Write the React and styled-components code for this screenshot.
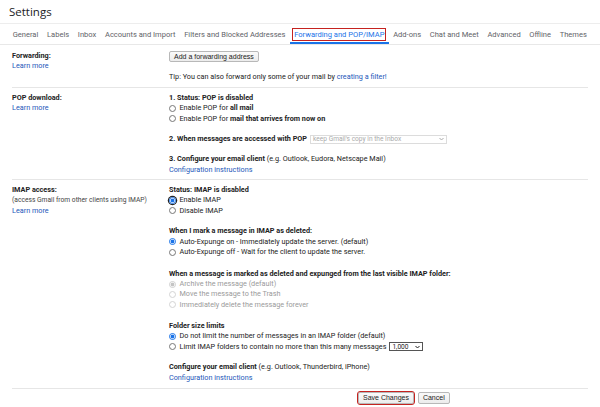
import React from "react";
import styled, { createGlobalStyle, css } from "styled-components";

const GlobalStyle = createGlobalStyle`
  body {
    margin: 0;
    background: #fff;
    font-family: Roboto, "Liberation Sans", Arial, sans-serif;
    color: #222;
  }
`;

const Page = styled.div`
  width: 600px;
  height: 407px;
  overflow: hidden;
`;

const Header = styled.div`
  height: 24px;
  box-sizing: border-box;
  padding: 5px 9px 0;
  border-bottom: 1px solid #ededed;
`;

const Title = styled.h1`
  margin: 0;
  font-family: "Open Sans", Roboto, sans-serif;
  font-size: 11.5px;
  font-weight: 400;
  color: #202124;
  line-height: 14px;
`;

const Tabs = styled.nav`
  display: flex;
  height: 21px;
  box-sizing: border-box;
  padding: 0 0 0 8.3px;
  border-bottom: 1px solid #e8e8e8;
`;

const Tab = styled.div`
  display: flex;
  align-items: center;
  padding: 0 4.35px;
  font-family: Roboto, sans-serif;
  font-size: 7.55px;
  color: #5f6368;
  ${(p) =>
    p.$active &&
    css`
      color: #1a73e8;
      box-shadow: inset 0 -2px 0 #1a73e8;
    `}
`;

const Marked = styled.span`
  outline: 1.5px solid #c5221f;
  outline-offset: 1px;
`;

const Body = styled.div`
  margin: 0 12px;
  font-size: 7.25px;
  line-height: 10.3px;
`;

const Section = styled.section`
  display: grid;
  grid-template-columns: 157px 1fr;
  padding: ${(p) => p.$pad};
  border-bottom: 1px solid #e6e6e6;
`;

const Label = styled.div`
  font-weight: 700;
  color: #222;
`;

const Note = styled.div`
  font-size: 6.7px;
  color: #444;
`;

const Link = styled.a`
  color: #1c58b9;
  text-decoration: none;
  cursor: pointer;
`;

const Group = styled.div`
  margin-top: ${(p) => p.$gap || 0}px;
`;

const Line = styled.div`
  display: flex;
  align-items: center;
  white-space: nowrap;
  height: 10.3px;
  color: ${(p) => (p.$muted ? "#9a9a9a" : "#222")};
`;

const Strong = styled.b`
  font-weight: 700;
`;

const Radio = styled.span`
  box-sizing: border-box;
  width: 7px;
  height: 7px;
  margin-right: 3.5px;
  border-radius: 50%;
  border: 1px solid ${(p) => (p.$disabled ? "#d4d4d4" : "#777")};
  background: #fff;
  flex: none;
  ${(p) =>
    p.$checked &&
    css`
      border-color: ${p.$disabled ? "#d0d0d0" : "#1a73e8"};
      background: radial-gradient(
        circle,
        ${p.$disabled ? "#c4c4c4" : "#1a73e8"} 0 1.8px,
        #fff 2.1px
      );
    `}
  ${(p) =>
    p.$focus &&
    css`
      box-shadow: 0 0 0 1.2px #222;
    `}
`;

const Button = styled.button`
  font-family: "Liberation Sans", Arial, sans-serif;
  font-size: 7px;
  height: ${(p) => p.$h || 11}px;
  padding: 0 4px;
  color: #222;
  background: linear-gradient(#fafafa, #ececec);
  border: 1px solid #b8b8b8;
  border-radius: 2px;
  line-height: 1;
  ${(p) =>
    p.$marked &&
    css`
      outline: 1.5px solid #c5221f;
      outline-offset: 0;
    `}
`;

const Select = styled.div`
  display: inline-flex;
  align-items: center;
  justify-content: space-between;
  box-sizing: border-box;
  width: ${(p) => p.$w}px;
  height: 9px;
  margin-left: 3px;
  padding: 0 2px 0 2px;
  font-size: 6.6px;
  border: 1px solid ${(p) => (p.$disabled ? "#dcdcdc" : "#555")};
  color: ${(p) => (p.$disabled ? "#aaa" : "#222")};
  background: #fff;
`;

const Chevron = ({ color }) => (
  <svg width="5" height="4" viewBox="0 0 10 6">
    <path d="M1 1l4 4 4-4" fill="none" stroke={color} strokeWidth="2" />
  </svg>
);

const Actions = styled.div`
  display: flex;
  gap: 4px;
  padding: 3px 0 0 346px;
`;

const tabs = [
  "General",
  "Labels",
  "Inbox",
  "Accounts and Import",
  "Filters and Blocked Addresses",
  "Forwarding and POP/IMAP",
  "Add-ons",
  "Chat and Meet",
  "Advanced",
  "Offline",
  "Themes",
];

const Option = ({ children, ...radio }) => (
  <Line $muted={radio.$disabled}>
    <Radio {...radio} />
    <span>{children}</span>
  </Line>
);

export default function App() {
  return (
    <Page>
      <GlobalStyle />
      <Header>
        <Title>Settings</Title>
      </Header>
      <Tabs>
        {tabs.map((t) =>
          t === "Forwarding and POP/IMAP" ? (
            <Tab key={t} $active>
              <Marked>{t}</Marked>
            </Tab>
          ) : (
            <Tab key={t}>{t}</Tab>
          )
        )}
      </Tabs>

      <Body>
        <Section $pad="5.5px 0 5px">
          <div>
            <Label>Forwarding:</Label>
            <Link>Learn more</Link>
          </div>
          <div>
            <Button>Add a forwarding address</Button>
            <Group $gap={10}>
              <Line>
                Tip: You can also forward only some of your mail by&nbsp;
                <Link>creating a filter!</Link>
              </Line>
            </Group>
          </div>
        </Section>

        <Section $pad="5px 0 4.1px">
          <div>
            <Label>POP download:</Label>
            <Link>Learn more</Link>
          </div>
          <div>
            <Line>
              <Strong>1. Status: POP is disabled</Strong>
            </Line>
            <Option>
              Enable POP for <Strong>all mail</Strong>
            </Option>
            <Option>
              Enable POP for <Strong>mail that arrives from now on</Strong>
            </Option>
            <Group $gap={10}>
              <Line>
                <Strong>2. When messages are accessed with POP</Strong>
                <Select $w={137} $disabled>
                  <span>keep Gmail's copy in the Inbox</span>
                  <Chevron color="#aaa" />
                </Select>
              </Line>
            </Group>
            <Group $gap={10}>
              <Line>
                <Strong>3. Configure your email client</Strong>&nbsp;(e.g.
                Outlook, Eudora, Netscape Mail)
              </Line>
              <Line>
                <Link>Configuration instructions</Link>
              </Line>
            </Group>
          </div>
        </Section>

        <Section $pad="5px 0 5px">
          <div>
            <Label>IMAP access:</Label>
            <Note>(access Gmail from other clients using IMAP)</Note>
            <Link>Learn more</Link>
          </div>
          <div>
            <Line>
              <Strong>Status: IMAP is disabled</Strong>
            </Line>
            <Option $checked $focus>
              Enable IMAP
            </Option>
            <Option>Disable IMAP</Option>

            <Group $gap={10.5}>
              <Line>
                <Strong>When I mark a message in IMAP as deleted:</Strong>
              </Line>
              <Option $checked>
                Auto-Expunge on - Immediately update the server. (default)
              </Option>
              <Option>Auto-Expunge off - Wait for the client to update the server.</Option>
            </Group>

            <Group $gap={11.5}>
              <Line>
                <Strong>
                  When a message is marked as deleted and expunged from the last
                  visible IMAP folder:
                </Strong>
              </Line>
              <Option $checked $disabled>
                Archive the message (default)
              </Option>
              <Option $disabled>Move the message to the Trash</Option>
              <Option $disabled>Immediately delete the message forever</Option>
            </Group>

            <Group $gap={11}>
              <Line>
                <Strong>Folder size limits</Strong>
              </Line>
              <Option $checked>
                Do not limit the number of messages in an IMAP folder (default)
              </Option>
              <Option>
                Limit IMAP folders to contain no more than this many messages
                <Select $w={34}>
                  <span>1,000</span>
                  <Chevron color="#222" />
                </Select>
              </Option>
            </Group>

            <Group $gap={10.5}>
              <Line>
                <Strong>Configure your email client</Strong>&nbsp;(e.g. Outlook,
                Thunderbird, iPhone)
              </Line>
              <Line>
                <Link>Configuration instructions</Link>
              </Line>
            </Group>
          </div>
        </Section>

        <Actions>
          <Button $h={12} $marked>
            Save Changes
          </Button>
          <Button $h={12}>Cancel</Button>
        </Actions>
      </Body>
    </Page>
  );
}
